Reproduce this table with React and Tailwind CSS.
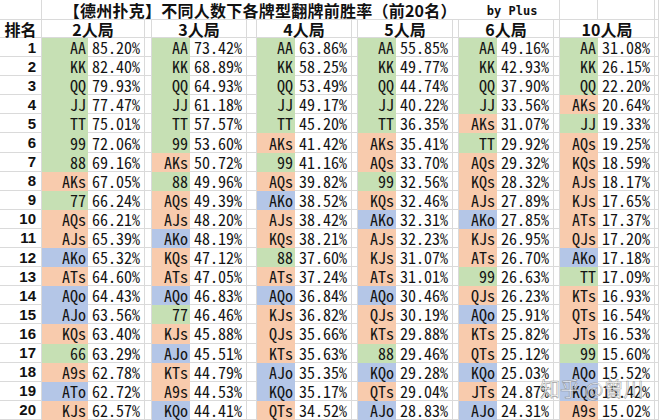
import React from "react";

const groups = [
  { name: "2人局", rows: [
    ["AA","85.20%"],["KK","82.40%"],["QQ","79.93%"],["JJ","77.47%"],["TT","75.01%"],["99","72.06%"],["88","69.16%"],["AKs","67.05%"],["77","66.24%"],["AQs","66.21%"],["AJs","65.39%"],["AKo","65.32%"],["ATs","64.60%"],["AQo","64.43%"],["AJo","63.56%"],["KQs","63.40%"],["66","63.29%"],["A9s","62.78%"],["ATo","62.72%"],["KJs","62.57%"]]},
  { name: "3人局", rows: [
    ["AA","73.42%"],["KK","68.89%"],["QQ","64.93%"],["JJ","61.18%"],["TT","57.57%"],["99","53.60%"],["AKs","50.72%"],["88","49.96%"],["AQs","49.39%"],["AJs","48.20%"],["AKo","48.19%"],["KQs","47.12%"],["ATs","47.05%"],["AQo","46.83%"],["77","46.46%"],["KJs","45.88%"],["AJo","45.51%"],["KTs","44.79%"],["A9s","44.53%"],["KQo","44.41%"]]},
  { name: "4人局", rows: [
    ["AA","63.86%"],["KK","58.25%"],["QQ","53.49%"],["JJ","49.17%"],["TT","45.20%"],["AKs","41.42%"],["99","41.16%"],["AQs","39.82%"],["AKo","38.52%"],["AJs","38.42%"],["KQs","38.21%"],["88","37.60%"],["ATs","37.24%"],["AQo","36.84%"],["KJs","36.82%"],["QJs","35.66%"],["KTs","35.63%"],["AJo","35.35%"],["KQo","35.17%"],["QTs","34.52%"]]},
  { name: "5人局", rows: [
    ["AA","55.85%"],["KK","49.77%"],["QQ","44.74%"],["JJ","40.22%"],["TT","36.35%"],["AKs","35.41%"],["AQs","33.70%"],["99","32.56%"],["KQs","32.46%"],["AKo","32.31%"],["AJs","32.23%"],["KJs","31.07%"],["ATs","31.01%"],["AQo","30.46%"],["QJs","30.19%"],["KTs","29.88%"],["88","29.46%"],["KQo","29.28%"],["QTs","29.04%"],["AJo","28.83%"]]},
  { name: "6人局", rows: [
    ["AA","49.16%"],["KK","42.93%"],["QQ","37.90%"],["JJ","33.56%"],["AKs","31.07%"],["TT","29.92%"],["AQs","29.32%"],["KQs","28.32%"],["AJs","27.89%"],["AKo","27.85%"],["KJs","26.95%"],["ATs","26.70%"],["99","26.63%"],["QJs","26.23%"],["AQo","25.91%"],["KTs","25.82%"],["QTs","25.12%"],["KQo","25.03%"],["JTs","24.87%"],["AJo","24.31%"]]},
  { name: "10人局", rows: [
    ["AA","31.08%"],["KK","26.15%"],["QQ","22.20%"],["AKs","20.64%"],["JJ","19.33%"],["AQs","19.25%"],["KQs","18.59%"],["AJs","18.17%"],["KJs","17.65%"],["ATs","17.37%"],["QJs","17.20%"],["AKo","17.18%"],["TT","17.09%"],["KTs","16.93%"],["QTs","16.54%"],["JTs","16.53%"],["99","15.60%"],["AQo","15.52%"],["KQo","15.42%"],["A9s","15.02%"]]},
];

const GREEN = "bg-[#c6e0b4] border-[#c6e0b4]";
const ORANGE = "bg-[#f8cbad] border-[#f8cbad]";
const BLUE = "bg-[#b4c6e7] border-[#b4c6e7]";
const colorOf = (h) =>
  h.length === 2 && h[0] === h[1] ? GREEN : h.endsWith("s") ? ORANGE : BLUE;

const cell = "border-r border-b border-[#dadada] box-border";
const mono = "font-['Noto_Sans_Mono_CJK_SC','DejaVu_Sans_Mono',monospace] text-[16px] text-[#141414]";
const cjkBold = "font-['Noto_Sans_CJK_SC',sans-serif] font-bold text-[#111]";

export default function App() {
  const cells = [];
  // title row
  cells.push(<div key="t0" className={cell} />);
  cells.push(
    <div key="t1" className={`${cell} col-span-15 flex items-center justify-center gap-[30px]`}>
      <span className={`${cjkBold} text-[16px] tracking-[0.25px] leading-none`}>
        【德州扑克】不同人数下各牌型翻牌前胜率（前20名）
      </span>
      <span className="font-['DejaVu_Sans_Mono',monospace] font-bold text-[12px] text-[#111] leading-none mt-[3px]">
        by Plus
      </span>
    </div>
  );
  cells.push(<div key="t2" className={cell} />);
  cells.push(<div key="t3" className={cell} />);
  cells.push(<div key="t4" className={cell} />);
  // header row
  cells.push(
    <div key="h0" className={`${cell} flex items-center justify-center ${cjkBold} text-[16px] leading-none`}>
      排名
    </div>
  );
  groups.forEach((g, gi) => {
    cells.push(
      <div key={`h${gi}a`} className={`${cell} col-span-2 flex items-center justify-center ${cjkBold} text-[16px] leading-none`}>
        {g.name}
      </div>
    );
    cells.push(<div key={`h${gi}b`} className={cell} />);
  });
  // data rows
  for (let r = 0; r < 20; r++) {
    cells.push(
      <div key={`r${r}`} className={`${cell} flex items-center justify-end pr-[5px] font-['Liberation_Sans',sans-serif] font-bold text-[15px] text-[#111] leading-none`}>
        {r + 1}
      </div>
    );
    groups.forEach((g, gi) => {
      const [h, p] = g.rows[r];
      cells.push(
        <div key={`r${r}g${gi}h`} className={`border-r border-b box-border ${colorOf(h)} flex items-center justify-end pr-[1px] ${mono} leading-none`}>
          {h}
        </div>
      );
      cells.push(
        <div key={`r${r}g${gi}p`} className={`${cell} flex items-center justify-end pr-[4px] ${mono} leading-none`}>
          {p}
        </div>
      );
      cells.push(<div key={`r${r}g${gi}s`} className={cell} />);
    });
  }

  return (
    <div className="relative w-[659px] h-[420px] overflow-hidden bg-white">
      <div className="grid grid-cols-[42px_46px_57px_7px_38px_57px_10px_38px_57px_6px_38px_57px_6px_38px_57px_6px_38px_57px_4px] grid-rows-[20px_18px_repeat(20,19.1px)]">
        {cells}
      </div>
      <div className="absolute left-[540px] top-[379px] font-['Noto_Sans_CJK_SC',sans-serif] text-[20px] leading-none text-[rgba(255,255,255,0.72)] [-webkit-text-stroke:0.6px_rgba(120,120,120,0.7)] whitespace-nowrap">
        知乎 @曾川
      </div>
    </div>
  );
}
